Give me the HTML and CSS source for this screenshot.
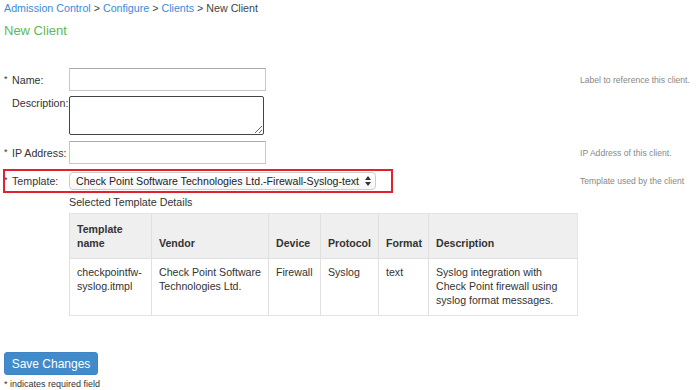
FILE: index.html
```html
<!DOCTYPE html>
<html>
<head>
	<meta charset="utf-8">
	<title>New Client</title>
	<link rel="stylesheet" href="styles.css">
</head>
<body>
	<div class="page">
		<div class="crumbs">
			<a href="#">Admission Control</a> &gt; <a href="#">Configure</a> &gt; <a href="#">Clients</a> &gt; New Client
		</div>
		<h2>New Client</h2>

		<form class="client-form">
			<div class="row row-name">
				<div class="field">
					<label><span class="req">*</span>Name:</label>
					<input type="text" class="text-input">
				</div>
				<div class="help">Label to reference this client.</div>
			</div>
			<div class="row row-desc">
				<div class="field">
					<label class="top"><span class="req"></span>Description:</label>
					<textarea class="text-area"></textarea>
				</div>
			</div>
			<div class="row row-ip">
				<div class="field">
					<label><span class="req">*</span>IP Address:</label>
					<input type="text" class="text-input">
				</div>
				<div class="help">IP Address of this client.</div>
			</div>
			<div class="row row-template">
				<div class="field">
					<div class="highlight">
						<label><span class="req">*</span>Template:</label>
						<div class="select-box">
							<select>
								<option>Check Point Software Technologies Ltd.-Firewall-Syslog-text</option>
							</select>
							<svg width="6" height="10" viewBox="0 0 6 10">
								<path d="M3 0 L6 4 L0 4 Z" fill="#333"/>
								<path d="M0 6 L6 6 L3 10 Z" fill="#333"/>
							</svg>
						</div>
					</div>
				</div>
				<div class="help">Template used by the client</div>
			</div>

			<div class="details">
				<div class="details-title">Selected Template Details</div>
				<table>
					<thead>
						<tr>
							<th class="c1">Template name</th>
							<th class="c2">Vendor</th>
							<th class="c3">Device</th>
							<th class="c4">Protocol</th>
							<th class="c5">Format</th>
							<th class="c6">Description</th>
						</tr>
					</thead>
					<tbody>
						<tr>
							<td>checkpointfw-syslog.itmpl</td>
							<td>Check Point Software Technologies Ltd.</td>
							<td>Firewall</td>
							<td>Syslog</td>
							<td>text</td>
							<td>Syslog integration with Check Point firewall using syslog format messages.</td>
						</tr>
					</tbody>
				</table>
			</div>

			<button type="button" class="save">Save Changes</button>
			<div class="note">* indicates required field</div>
		</form>
	</div>
</body>
</html>
```

FILE: styles.css
```css
body,html{
	margin: 0;
	padding: 0;
}
*{
	font-family: "Liberation Sans", Helvetica, Arial, sans-serif;
	box-sizing: border-box;
}
body{
	color: #333;
	font-size: 11px;
}
.page{
	padding: 1px 4px;
}
.crumbs{
	line-height: 14px;
	font-size: 10.7px;
	color: #444;
}
.crumbs a{
	color: #3b8bd6;
	text-decoration: none;
}
h2{
	margin: 8px 0 0 0;
	font-size: 13px;
	line-height: 16px;
	font-weight: normal;
	color: #5cb85c;
}
.client-form{
	margin-top: 29px;
}
.row{
	display: flex;
	align-items: center;
}
.field{
	display: flex;
	align-items: center;
	width: 576px;
	flex-shrink: 0;
}
.field label{
	width: 65px;
	flex-shrink: 0;
	font-size: 10.7px;
	color: #333;
	white-space: nowrap;
}
.field label.top{
	align-self: flex-start;
	padding-top: 1px;
}
.req{
	display: inline-block;
	width: 8px;
	font-size: 9px;
	vertical-align: top;
}
.help{
	font-size: 8.6px;
	color: #888;
	white-space: nowrap;
}
.text-input{
	width: 197px;
	height: 23px;
	margin: 0;
	border: 1px solid #c8c8c8;
	border-top-color: #aaa;
	background: white;
	padding: 2px 4px;
}
.text-area{
	width: 195px;
	height: 39px;
	margin: 0;
	border: 1px solid #444;
	border-radius: 2px;
	resize: both;
}
.row-desc{
	margin-top: 5px;
}
.row-ip{
	margin-top: 6px;
}
.row-template{
	margin-top: 6px;
}
.highlight{
	display: flex;
	align-items: center;
	width: 388px;
	height: 22px;
	outline: 2px solid #e2212c;
	outline-offset: -1px;
}
.select-box{
	display: flex;
	align-items: center;
	width: 307px;
	flex-shrink: 0;
	height: 18px;
	border: 1px solid #ccc;
	border-radius: 4px;
	background: linear-gradient(#fff, #f6f6f6);
	padding: 0 4px 0 6px;
}
.select-box select{
	flex: 1;
	min-width: 0;
	appearance: none;
	-webkit-appearance: none;
	border: none;
	background: transparent;
	font-size: 10.6px;
	color: #222;
	padding: 0;
	outline: none;
}
.select-box svg{
	flex-shrink: 0;
}
.details{
	margin-left: 65px;
	margin-top: 3px;
}
.details-title{
	line-height: 14px;
	font-size: 10.7px;
}
table{
	margin-top: 4px;
	border-collapse: collapse;
	width: 508px;
	table-layout: fixed;
	border: 1px solid #e4e4e4;
}
th, td{
	text-align: left;
	border-left: 1px solid #e0e0e0;
	font-size: 10.6px;
	line-height: 14px;
	color: #333;
}
th{
	background-color: #efefef;
	font-weight: bold;
	vertical-align: bottom;
	padding: 8px 6px 8px 7px;
	border-bottom: 1px solid #e0e0e0;
}
td{
	vertical-align: top;
	padding: 6px 4px 8px 7px;
	background-color: white;
}
.c1{ width: 82px; }
.c2{ width: 117px; }
.c3{ width: 52px; }
.c4{ width: 58px; }
.c5{ width: 50px; }
.c6{ width: 149px; }
.save{
	display: block;
	margin-top: 36px;
	width: 94px;
	height: 23px;
	background-color: #428bca;
	border: 1px solid #3f84c2;
	border-radius: 3px;
	color: white;
	font-size: 12px;
	padding: 0;
}
.note{
	margin-top: 3px;
	font-size: 9px;
	line-height: 12px;
	color: #333;
}
```
